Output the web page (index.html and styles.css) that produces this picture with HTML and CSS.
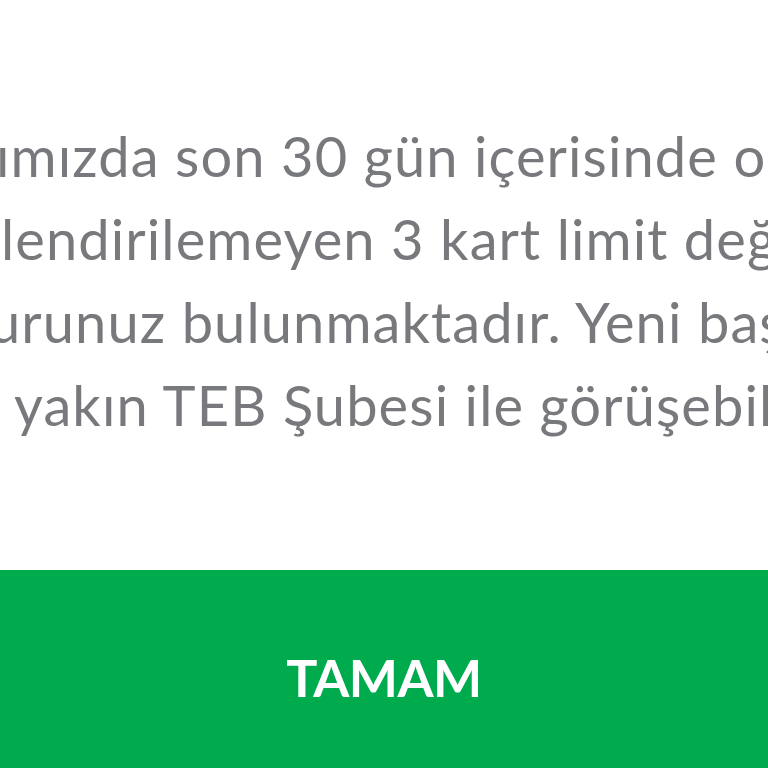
FILE: index.html
```html
<!DOCTYPE html>
<html lang="tr">
<head>
<meta charset="utf-8">
<link rel="stylesheet" href="styles.css">
</head>
<body>
<div class="dialog">
  <div class="message">
    <div class="line line-1">ımızda son 30 gün içerisinde onaylanmış</div>
    <div class="line line-2">lendirilemeyen 3 kart limit değişikliği</div>
    <div class="line line-3">urunuz bulunmaktadır. Yeni başvuru için</div>
    <div class="line line-4">yakın TEB Şubesi ile görüşebilirsiniz.</div>
  </div>
  <button class="ok-button">TAMAM</button>
</div>
</body>
</html>
```
FILE: styles.css
```css
html, body {
  margin: 0;
  padding: 0;
  background: #ffffff;
}
body {
  width: 768px;
  height: 768px;
  overflow: hidden;
}
.dialog {
  display: flex;
  flex-direction: column;
  height: 768px;
  font-family: Lato, "Open Sans", sans-serif;
}
.message {
  padding-top: 114px;
  height: 570px;
  flex: none;
  box-sizing: border-box;
  overflow: hidden;
  color: #77797c;
  font-size: 56px;
  line-height: 83px;
  letter-spacing: 1.1px;
}
.line {
  white-space: nowrap;
}
.line-1 { margin-left: -4px; }
.line-2 { margin-left: 1px; }
.line-3 { margin-left: -11px; }
.line-4 { margin-left: 14px; }
.ok-button {
  flex: 1;
  border: 0;
  margin: 0;
  background: #00ab4e;
  color: #ffffff;
  font-family: Lato, "Open Sans", sans-serif;
  font-weight: 700;
  font-size: 52px;
  line-height: 1;
  letter-spacing: -0.5px;
  padding: 81px 0 0 0;
  width: 100%;
  display: flex;
  justify-content: center;
  align-items: flex-start;
}
```
